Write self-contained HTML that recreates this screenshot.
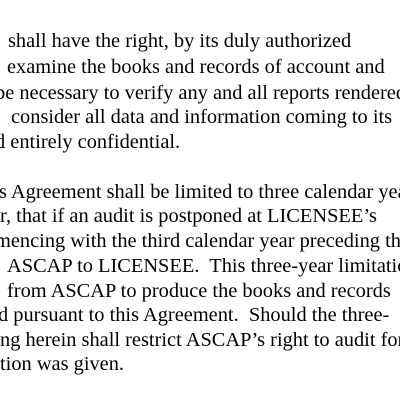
<!DOCTYPE html>
<html><head><style>
html,body{margin:0;padding:0;background:#fff;width:400px;height:400px;overflow:hidden;position:relative}
.l{position:absolute;white-space:pre;font-family:"Liberation Serif",serif;font-size:20.4px;color:#000;line-height:24px}
</style></head><body>
<div class="l" style="left:8px;top:29px">shall have the right, by its duly authorized</div>
<div class="l" style="left:7px;top:55px">examine the books and records of account and</div>
<div class="l" style="left:-5px;top:81px">be necessary to verify any and all reports rendered</div>
<div class="l" style="left:11px;top:105px">consider all data and information coming to its</div>
<div class="l" style="left:-5px;top:130px">d entirely confidential.</div>
<div class="l" style="left:-1px;top:180px">s Agreement shall be limited to three calendar years</div>
<div class="l" style="left:0px;top:204px">r, that if an audit is postponed at LICENSEE’s</div>
<div class="l" style="left:-5px;top:229px">mencing with the third calendar year preceding the</div>
<div class="l" style="left:7px;top:254px">ASCAP to LICENSEE.  This three-year limitation</div>
<div class="l" style="left:7px;top:279px">from ASCAP to produce the books and records</div>
<div class="l" style="left:-2px;top:303px">d pursuant to this Agreement.  Should the three-</div>
<div class="l" style="left:0px;top:328px">ng herein shall restrict ASCAP’s right to audit for</div>
<div class="l" style="left:0px;top:352px">tion was given.</div>
</body></html>
